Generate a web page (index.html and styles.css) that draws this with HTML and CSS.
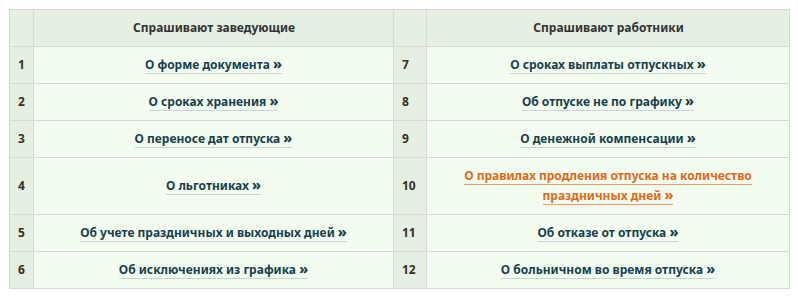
FILE: index.html
```html
<!DOCTYPE html>
<html lang="ru">
<head>
<meta charset="utf-8">
<link rel="stylesheet" href="styles.css">
</head>
<body>
<table class="qa">
  <colgroup>
    <col class="c-num1"><col class="c-text1"><col class="c-num2"><col class="c-text2">
  </colgroup>
  <thead>
    <tr>
      <th class="num"></th>
      <th class="head">Спрашивают заведующие</th>
      <th class="num"></th>
      <th class="head">Спрашивают работники</th>
    </tr>
  </thead>
  <tbody>
    <tr>
      <td class="num">1</td><td class="cell"><a class="lnk" href="#">О форме документа&nbsp;<span class="arr">»</span></a></td>
      <td class="num">7</td><td class="cell"><a class="lnk" href="#">О сроках выплаты отпускных&nbsp;<span class="arr">»</span></a></td>
    </tr>
    <tr>
      <td class="num">2</td><td class="cell"><a class="lnk" href="#">О сроках хранения&nbsp;<span class="arr">»</span></a></td>
      <td class="num">8</td><td class="cell"><a class="lnk" href="#">Об отпуске не по графику&nbsp;<span class="arr">»</span></a></td>
    </tr>
    <tr>
      <td class="num">3</td><td class="cell"><a class="lnk" href="#">О переносе дат отпуска&nbsp;<span class="arr">»</span></a></td>
      <td class="num">9</td><td class="cell"><a class="lnk" href="#">О денежной компенсации&nbsp;<span class="arr">»</span></a></td>
    </tr>
    <tr>
      <td class="num">4</td><td class="cell"><a class="lnk" href="#">О льготниках&nbsp;<span class="arr">»</span></a></td>
      <td class="num">10</td><td class="cell"><a class="lnk active" href="#">О правилах продления отпуска на количество праздничных дней&nbsp;<span class="arr">»</span></a></td>
    </tr>
    <tr>
      <td class="num">5</td><td class="cell"><a class="lnk" href="#">Об учете праздничных и выходных дней&nbsp;<span class="arr">»</span></a></td>
      <td class="num">11</td><td class="cell"><a class="lnk" href="#">Об отказе от отпуска&nbsp;<span class="arr">»</span></a></td>
    </tr>
    <tr>
      <td class="num">6</td><td class="cell"><a class="lnk" href="#">Об исключениях из графика&nbsp;<span class="arr">»</span></a></td>
      <td class="num">12</td><td class="cell"><a class="lnk" href="#">О больничном во время отпуска&nbsp;<span class="arr">»</span></a></td>
    </tr>
  </tbody>
</table>
</body>
</html>
```
FILE: styles.css
```css
html, body {
  margin: 0;
  padding: 0;
  background: #ffffff;
}
body {
  padding: 9px;
  font-family: "Noto Sans", "Open Sans", sans-serif;
  font-size: 12px;
  font-weight: 700;
  color: #333333;
}
.qa {
  border-collapse: collapse;
  width: 780px;
  table-layout: fixed;
}
.c-num1 { width: 24px; }
.c-text1 { width: 360px; }
.c-num2 { width: 33px; }
.c-text2 { width: 363px; }
.qa th, .qa td {
  border: 1px solid #d8d8d8;
  line-height: 20px;
  padding: 8px 7px 8px 8px;
}
.qa th {
  background: #e5efe2;
  text-align: center;
  font-weight: 700;
  color: #333333;
}
.qa td.num {
  background: #e5efe2;
  text-align: left;
  color: #3a2e20;
}
.qa td.cell {
  background: #f2fdef;
  text-align: center;
  padding-left: 30px;
  padding-right: 30px;
}
.lnk {
  color: #183f4e;
  text-decoration: none;
  border-bottom: 1px solid #c8d6dc;
}
.lnk.active {
  color: #e0691a;
  border-bottom-color: #ef9c68;
}
.arr {
  font-size: 14px;
  line-height: 1;
  font-weight: 800;
}
```
